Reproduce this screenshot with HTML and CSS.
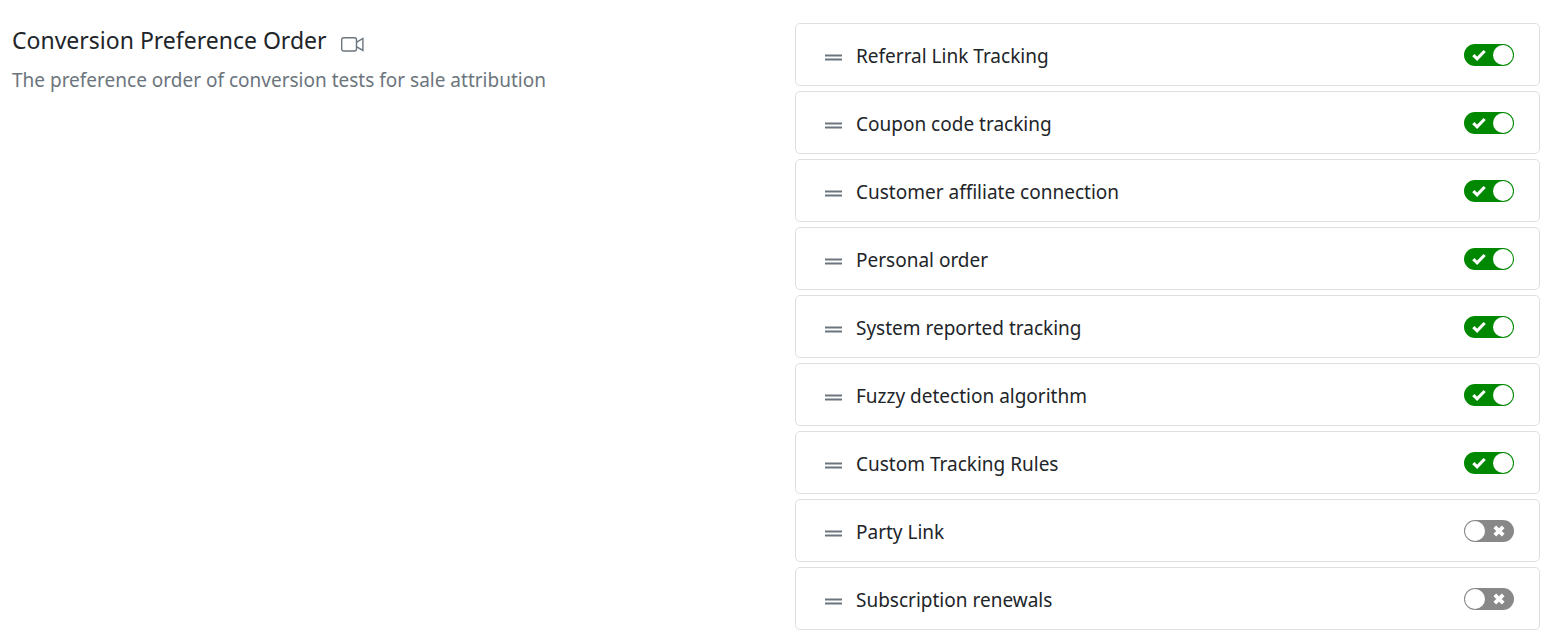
FILE: index.html
```html
<!DOCTYPE html>
<html lang="en">
<head>
<meta charset="utf-8">
<meta name="viewport" content="width=device-width, initial-scale=1">
<title>Conversion Preference Order</title>
<link rel="stylesheet" href="styles.css">
</head>
<body>
<svg class="sprite" aria-hidden="true">
  <symbol id="grip" viewBox="0 0 17 7"><path d="M0 0h17v3H0zM0 4h17v3H0z" fill="currentColor" opacity=".5"/><path d="M0 1h17v1H0zM0 5h17v1H0z" fill="currentColor"/></symbol>
  <symbol id="check" viewBox="0 0 14 12"><path d="M1.3 6.2 5.1 9.8 12.7 2" fill="none" stroke="currentColor" stroke-width="3.1"/></symbol>
  <symbol id="cross" viewBox="0 0 12 12"><path d="M1.8 1.8 10.2 10.2M10.2 1.8 1.8 10.2" fill="none" stroke="currentColor" stroke-width="3.8"/></symbol>
</svg>
<main class="settings">
  <section class="intro">
    <div class="heading">
      <h1 class="title">Conversion Preference Order</h1>
      <a class="video" href="#" aria-label="Watch video">
        <svg class="video-icon" viewBox="0 0 23 15" fill="none" stroke="currentColor"><rect x=".7" y=".7" width="14.8" height="13.3" rx="2" stroke-width="1.4"/><path d="M15.8 5.2 21.9 1.5V13.4L15.8 9.8" stroke-width="1.4"/></svg>
      </a>
    </div>
    <p class="description">The preference order of conversion tests for sale attribution</p>
  </section>
  <ul class="list">
    <li class="item"><svg class="grip"><use href="#grip"/></svg><label class="name" for="s1">Referral Link Tracking</label><span class="switch"><input class="toggle" type="checkbox" role="switch" id="s1" checked><svg class="mark check"><use href="#check"/></svg><svg class="mark cross"><use href="#cross"/></svg></span></li>
    <li class="item"><svg class="grip"><use href="#grip"/></svg><label class="name" for="s2">Coupon code tracking</label><span class="switch"><input class="toggle" type="checkbox" role="switch" id="s2" checked><svg class="mark check"><use href="#check"/></svg><svg class="mark cross"><use href="#cross"/></svg></span></li>
    <li class="item"><svg class="grip"><use href="#grip"/></svg><label class="name" for="s3">Customer affiliate connection</label><span class="switch"><input class="toggle" type="checkbox" role="switch" id="s3" checked><svg class="mark check"><use href="#check"/></svg><svg class="mark cross"><use href="#cross"/></svg></span></li>
    <li class="item"><svg class="grip"><use href="#grip"/></svg><label class="name" for="s4">Personal order</label><span class="switch"><input class="toggle" type="checkbox" role="switch" id="s4" checked><svg class="mark check"><use href="#check"/></svg><svg class="mark cross"><use href="#cross"/></svg></span></li>
    <li class="item"><svg class="grip"><use href="#grip"/></svg><label class="name" for="s5">System reported tracking</label><span class="switch"><input class="toggle" type="checkbox" role="switch" id="s5" checked><svg class="mark check"><use href="#check"/></svg><svg class="mark cross"><use href="#cross"/></svg></span></li>
    <li class="item"><svg class="grip"><use href="#grip"/></svg><label class="name" for="s6">Fuzzy detection algorithm</label><span class="switch"><input class="toggle" type="checkbox" role="switch" id="s6" checked><svg class="mark check"><use href="#check"/></svg><svg class="mark cross"><use href="#cross"/></svg></span></li>
    <li class="item"><svg class="grip"><use href="#grip"/></svg><label class="name" for="s7">Custom Tracking Rules</label><span class="switch"><input class="toggle" type="checkbox" role="switch" id="s7" checked><svg class="mark check"><use href="#check"/></svg><svg class="mark cross"><use href="#cross"/></svg></span></li>
    <li class="item"><svg class="grip"><use href="#grip"/></svg><label class="name" for="s8">Party Link</label><span class="switch"><input class="toggle" type="checkbox" role="switch" id="s8"><svg class="mark check"><use href="#check"/></svg><svg class="mark cross"><use href="#cross"/></svg></span></li>
    <li class="item"><svg class="grip"><use href="#grip"/></svg><label class="name" for="s9">Subscription renewals</label><span class="switch"><input class="toggle" type="checkbox" role="switch" id="s9"><svg class="mark check"><use href="#check"/></svg><svg class="mark cross"><use href="#cross"/></svg></span></li>
  </ul>
</main>
</body>
</html>
```
FILE: styles.css
```css
* {
  box-sizing: border-box;
}

body {
  margin: 0;
  background: #fff;
  color: #212529;
  font-family: "Segoe UI", "Noto Sans", sans-serif;
  font-size: 19px;
  line-height: 28px;
}

.sprite {
  display: none;
}

.settings {
  display: grid;
  grid-template-columns: 1fr 1fr;
  gap: 38px;
  padding: 23px 7px 7px 12px;
}

.heading {
  display: flex;
  align-items: center;
  gap: 14px;
}

.title {
  margin: 0;
  font-size: 23px;
  font-weight: 400;
  line-height: 34px;
}

.video {
  display: flex;
  padding-top: 8px;
  color: #6c757d;
}

.video-icon {
  width: 23px;
  height: 15px;
}

.description {
  margin: 9px 0 0;
  color: #6c757d;
}

.list {
  display: flex;
  flex-direction: column;
  gap: 5px;
  margin: 0;
  padding: 0;
  list-style: none;
}

.item {
  display: flex;
  align-items: center;
  gap: 14px;
  padding: 17px 25px 16px 29px;
  border: 1px solid #dfdfdf;
  border-radius: 5px;
}

.grip {
  width: 17px;
  height: 7px;
  margin-top: 5px;
  color: #6c757d;
}

.name {
  flex: 1;
  padding-top: 2px;
  line-height: 26px;
}

.switch {
  position: relative;
  display: flex;
}

.toggle {
  appearance: none;
  width: 50px;
  height: 22px;
  margin: 0;
  padding: 1px;
  border-radius: 11px;
  background: #888;
  cursor: pointer;
}

.toggle::before {
  content: "";
  display: block;
  width: 20px;
  height: 20px;
  border-radius: 50%;
  background: #fff;
}

.toggle:checked {
  background: #008900;
}

.toggle:checked::before {
  margin-left: auto;
}

.mark {
  position: absolute;
  top: 5px;
  height: 12px;
  color: #fff;
  pointer-events: none;
}

.check {
  left: 8px;
  width: 14px;
  display: none;
}

.cross {
  left: 29px;
  width: 12px;
}

.toggle:checked ~ .check {
  display: block;
}

.toggle:checked ~ .cross {
  display: none;
}
```
